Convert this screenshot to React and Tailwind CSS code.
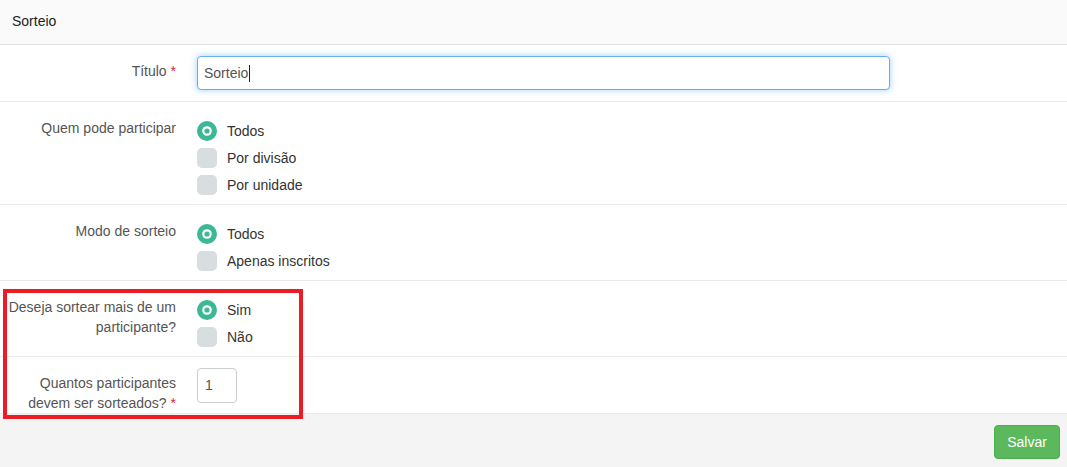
import React from "react";

const font = { fontFamily: '"Liberation Sans", Arial, sans-serif' };

function RadioOn() {
  return (
    <svg width="20" height="20" viewBox="0 0 20 20" className="shrink-0">
      <circle cx="10" cy="10" r="10" fill="#3cb896" />
      <circle cx="10" cy="10" r="4.8" fill="#ffffff" />
      <circle cx="10" cy="10" r="2.6" fill="#3cb896" />
    </svg>
  );
}

function RadioOff() {
  return <div className="w-[20px] h-[20px] rounded-[5px] bg-[#d8dde0] shrink-0" />;
}

function Option({ on, label }) {
  return (
    <div className="flex items-center h-[20px] gap-[10px]">
      {on ? <RadioOn /> : <RadioOff />}
      <span className="text-[14px] leading-5 text-[#333]">{label}</span>
    </div>
  );
}

function Row({ label, required, children, contentClass }) {
  return (
    <div className="flex items-start border-b border-[#ebebeb]">
      <div className="w-[176px] shrink-0 pt-[16px] text-right text-[14px] leading-5 text-[#555]">
        {label}
        {required && <span className="text-[#e3242b]"> *</span>}
      </div>
      <div className={"ml-[21px] " + contentClass}>{children}</div>
    </div>
  );
}

export default function App() {
  return (
    <div className="relative w-[1067px] h-[467px] bg-white overflow-hidden" style={font}>
      <div className="h-[45px] bg-[#fafafa] border-b border-[#e2e2e2] pt-[11px] px-[12px] text-[14px] leading-5 text-[#222]">
        Sorteio
      </div>

      <Row label="Título" required contentClass="pt-[11px] pb-[11px]">
        <div className="w-[693px] h-[34px] rounded-[4px] border border-[#66afe9] shadow-[0_0_7px_rgba(102,175,233,0.6)] bg-white flex items-center pl-[6px] text-[14px] text-[#555]">
          <span>Sorteio</span>
          <span className="inline-block w-px h-[17px] bg-[#222] ml-px" />
        </div>
      </Row>

      <Row label="Quem pode participar" contentClass="pt-[19px] pb-[9px] flex flex-col gap-[7px]">
        <Option on label="Todos" />
        <Option label="Por divisão" />
        <Option label="Por unidade" />
      </Row>

      <Row label="Modo de sorteio" contentClass="pt-[19px] pb-[9px] flex flex-col gap-[7px]">
        <Option on label="Todos" />
        <Option label="Apenas inscritos" />
      </Row>

      <Row
        label={
          <>
            Deseja sortear mais de um
            <br />
            participante?
          </>
        }
        contentClass="pt-[19px] pb-[9px] flex flex-col gap-[7px]"
      >
        <Option on label="Sim" />
        <Option label="Não" />
      </Row>

      <Row
        label={
          <>
            Quantos participantes
            <br />
            devem ser sorteados?
          </>
        }
        required
        contentClass="pt-[11px] pb-[10px]"
      >
        <div className="w-[40px] h-[35px] rounded-[4px] border border-[#ccc] bg-white flex items-center pl-[7px] text-[14px] text-[#555]">
          1
        </div>
      </Row>

      <div className="bg-[#f4f4f4] h-[60px] flex justify-end pt-[11px] pr-[7px]">
        <button className="h-[34px] w-[66px] rounded-[4px] bg-[#5cb85c] border border-[#4cae4c] text-white text-[14px]">
          Salvar
        </button>
      </div>

      <div className="absolute left-[3px] top-[289px] w-[300px] h-[130px] border-[4px] border-[#ec1c24] pointer-events-none" />
    </div>
  );
}
